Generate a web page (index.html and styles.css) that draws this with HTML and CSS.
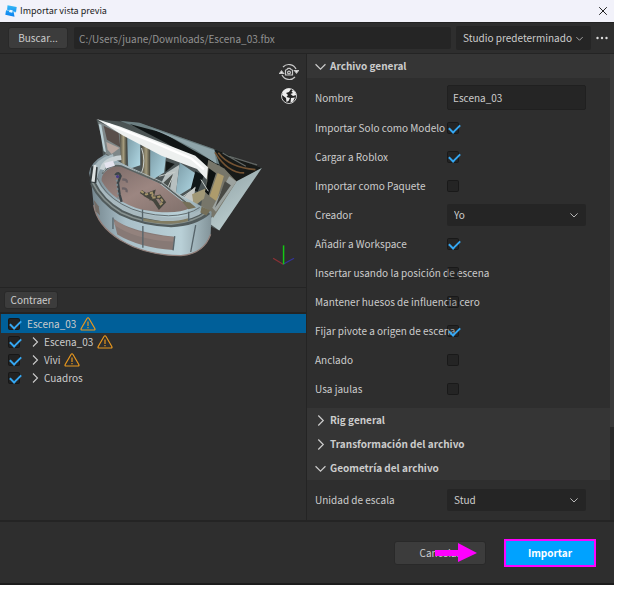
FILE: index.html
```html
<!DOCTYPE html>
<html lang="es">
<head>
<meta charset="utf-8">
<title>Importar vista previa</title>
<link rel="stylesheet" href="styles.css">
</head>
<body>
<svg width="0" height="0" class="defs" aria-hidden="true">
  <symbol id="down" viewBox="0 0 10 10"><path d="M.5 3L5 7.500 9.500 3" fill="none" stroke="currentColor" stroke-width="1.1"/></symbol>
  <symbol id="right" viewBox="0 0 10 10"><path d="M3 .5L7.500 5 3 9.500" fill="none" stroke="currentColor" stroke-width="1.1"/></symbol>
  <symbol id="warn" viewBox="0 0 16 14"><path d="M7 1.500Q8 0 9 1.500L14.800 11.500Q15.500 13 14 13H2Q.500 13 1.200 11.500Z" fill="none" stroke="#e8971e" stroke-width="1.200"/><path d="M8 4.500v4.500M8 10v1.300" stroke="#e8971e" stroke-width="1.200"/></symbol>
</svg>
<main class="window">
  <header class="titlebar">
    <svg class="logo" viewBox="0 0 12 12"><defs><linearGradient id="lg" x2="0" y2="1"><stop stop-color="#35b8f5"/><stop offset="1" stop-color="#087ff0"/></linearGradient></defs><path d="M2.500.300L11.700 2 11 7.300 8.700 7 9.500 11.700.300 9.800 1.100 5 3 5.300 2.100 4.800Z" fill="url(#lg)"/><path d="M4.600 4.700l3.100.600-.500 2.500-3.200-.700z" fill="#e9f6ff"/><path d="M1 5l3 .500M7.500 6.500l3.500.800" stroke="#b7e6fc" stroke-width=".600"/></svg>
    <h1>Importar vista previa</h1>
    <button class="close" aria-label="Cerrar"><svg viewBox="0 0 10 10"><path d="M1.200 1.200l7.600 7.600M8.800 1.200L1.200 8.800" stroke="#222" stroke-width="1"/></svg></button>
  </header>
  <div class="toolbar">
    <button class="btn browse">Buscar...</button>
    <input class="path" type="text" aria-label="Ruta del archivo" value="C:/Users/juane/Downloads/Escena_03.fbx">
    <div class="pick preset"><select aria-label="Ajuste"><option>Studio predeterminado</option></select><svg><use href="#down"/></svg></div>
    <button class="more" aria-label="Más"><svg viewBox="0 0 12 4"><g fill="#ddd"><circle cx="1.500" cy="2" r="1.200"/><circle cx="6" cy="2" r="1.200"/><circle cx="10.500" cy="2" r="1.200"/></g></svg></button>
  </div>
  <div class="content">
    <section class="left">
      <div class="viewport">
        <svg class="scene" viewBox="0 0 307 233" role="img" aria-label="Modelo 3D">
          <defs>
            <linearGradient id="side" x2=".6" y2="1"><stop stop-color="#8b9da1"/><stop offset="1" stop-color="#c0d2d3"/></linearGradient>
            <linearGradient id="floor" x2="1" y2="1"><stop stop-color="#796966"/><stop offset=".5" stop-color="#9c8681"/><stop offset="1" stop-color="#80706b"/></linearGradient>
            <linearGradient id="wall" x2="1"><stop stop-color="#71828a"/><stop offset=".3" stop-color="#a9bfc8"/><stop offset=".75" stop-color="#b9d0d7"/><stop offset="1" stop-color="#829399"/></linearGradient>
            <linearGradient id="pane" x2="1" y2="1"><stop stop-color="#7b9ba6"/><stop offset="1" stop-color="#b3dbe7"/></linearGradient>
            <linearGradient id="brass" x2="1"><stop stop-color="#4b4a40"/><stop offset=".5" stop-color="#a59c7d"/><stop offset="1" stop-color="#333630"/></linearGradient>
          </defs>
          <g transform="translate(80 51) scale(.3333)">
            <path d="M50 44L180 55 405 133 548 190 420 378 380 360 370 320 80 145Z" fill="#4b5454"/>
            <path d="M120 48L180 54 410 135 435 178 395 182 270 105Z" fill="#6d8083"/>
            <path d="M150 58L250 84 330 130 420 180 385 190 260 115Z" fill="#101515"/>
            <path d="M205 67L405 137 412 178 350 136 285 102Z" fill="#8fa5aa"/>
            <path d="M405 133L548 190 475 231 430 207Z" fill="#171a18"/>
            <path d="M417 144Q450 188 529 195M407 143Q445 205 495 205" fill="none" stroke="#745333" stroke-width="5"/>
            <path d="M430 145L500 185M450 155L534 181" stroke="#626765" stroke-width="4"/>
            <path d="M548 190L420 378 386 354 472 230Z" fill="url(#side)"/>
            <path d="M387 165L435 192 472 231 402 340 365 305Z" fill="#77766a"/>
            <path d="M415 205L434 214 412 290 391 275Z" fill="#ad9b6c"/>
            <path d="M450 215L472 231 410 322 399 310Z" fill="#9ca3a0"/>
            <path d="M437 230L455 242 407 310Z" fill="#494a45"/>
            <path d="M60 50L385 188 380 260 350 315 70 155Z" fill="#4c5556"/>
            <path d="M55 50L120 80 130 165 78 148Z" fill="#7e8788"/>
            <path d="M72 63L117 85 122 128 82 105Z" fill="#594f4b"/>
            <path d="M80 112L120 130 96 148 84 135Z" fill="#b7a69f"/>
            <path d="M57 58L65 60 79 143 72 140Z" fill="#b9cfd5"/>
            <path d="M120 80L143 94 140 184 124 173Z" fill="url(#brass)"/>
            <path d="M143 94L182 112 182 182 146 194Z" fill="url(#pane)"/>
            <path d="M186 117L214 132 213 226 186 215Z" fill="url(#brass)"/>
            <path d="M212 127L260 152 254 204 212 230Z" fill="url(#pane)"/>
            <path d="M260 170L286 178 258 202Z" fill="#151918"/>
            <path d="M260 205L300 180 289 270 241 244Z" fill="#b7c0c0"/>
            <path d="M251 235L280 208 270 261Z" fill="#4b514e"/>
            <path d="M301 174L348 206 338 248 288 279Z" fill="url(#pane)"/>
            <path d="M348 200L374 212 355 262 334 254Z" fill="#111819"/>
            <path d="M306 284L348 246 342 302 323 305Z" fill="#c3c7c5"/>
            <path d="M338 269L382 250 374 282 344 306Z" fill="#a19877"/>
            <path d="M388 190L410 206 388 272 377 262 384 231Z" fill="#0d1111"/>
            <path d="M186 130Q200 170 186 205M239 215L288 202M280 216L260 260M303 281L349 250M365 225L387 260" stroke="#c8cecb" stroke-width="3" fill="none"/>
            <path d="M51 43L123 66 275 125 348 153 386 188 382 225 353 193 246 153 130 92Z" fill="#edf0ef"/>
            <path d="M83 57L220 112 335 161 374 194" fill="none" stroke="#fff" stroke-width="7"/>
            <path d="M77 149Q31 174 28 205L35 236 42 302Q52 363 122 407 199 454 305 454 374 448 394 390L397 322Z" fill="url(#wall)"/>
            <path d="M42 302Q52 363 122 407 199 454 305 454 374 448 394 390" fill="none" stroke="#93817c" stroke-width="4"/>
            <path d="M66 229Q62 198 116 180L238 235 333 310Q290 334 188 316 100 291 66 229Z" fill="url(#floor)"/>
            <path d="M68 207Q84 178 125 184L245 235 330 302" fill="none" stroke="#59605f" stroke-width="5"/>
            <path d="M70 204Q86 174 125 177L245 231 334 298" fill="none" stroke="#a9b4b5" stroke-width="3"/>
            <path d="M33 202Q50 161 100 148L103 161Q60 179 52 222 67 267 122 298 181 335 269 339 340 338 371 309L386 326Q342 363 248 357 140 340 79 284 38 246 33 202Z" fill="#a8b9bf"/>
            <path d="M53 221Q75 270 127 299 184 332 267 334 326 333 361 309" fill="none" stroke="#626c6f" stroke-width="3"/>
            <path d="M39 234Q65 290 125 325 190 357 275 360 346 357 387 322" fill="none" stroke="#515b5c" stroke-width="17"/>
            <path d="M38 233Q66 290 125 325 191 357 275 359 345 354 386 321" fill="none" stroke="#87918f" stroke-width="5"/>
            <path d="M190 345Q270 363 328 345" fill="none" stroke="#827d63" stroke-width="8"/>
            <path d="M35 184L54 188 50 235 29 234Z" fill="#303739"/><path d="M42 180L50 182 45 232 35 231Z" fill="#dce2e2"/>
            <path d="M67 195Q75 164 125 159" fill="none" stroke="#c9d2d5" stroke-width="14"/>
            <path d="M74 175L100 168 106 183 79 192Z" fill="#e5e4ef"/>
            <path d="M101 342Q150 382 285 397L281 437Q180 430 113 390Z" fill="#877975"/>
            <path d="M105 353Q165 399 284 405" fill="none" stroke="#9f8c86" stroke-width="14" opacity=".5"/>
            <path d="M100 339V374M189 315V350M190 365V430M328 322V350M349 362L334 443M286 395L281 438" stroke="#56646a" stroke-width="4"/>
            <path d="M42 286L57 305 61 333 48 320Z" fill="#736b65"/>
            <path d="M107 212Q117 199 123 214L115 235 120 270 126 292" fill="none" stroke="#3b4448" stroke-width="7"/>
            <path d="M110 212L116 286" stroke="#7c8c92" stroke-width="5" stroke-dasharray="6 7"/><circle cx="114" cy="216" r="5" fill="#4a3c84"/>
            <path d="M128 225q15-2 14 9M127 252q17-2 14 11" fill="none" stroke="#6b6265" stroke-width="7"/>
            <path d="M184 261L200 272 221 264 217 281 240 276 253 293 239 308 225 287 195 270" fill="none" stroke="#45453d" stroke-width="11"/>
            <path d="M184 260L200 270 221 263 217 280 240 276 251 293 239 303" fill="none" stroke="#a4946b" stroke-width="6" stroke-dasharray="10 5"/>
            <path d="M307 290L332 294 350 309 327 314ZM367 306L393 318 381 333 363 324Z" fill="#756f58"/>
          </g>
          <path d="M284 211l-10-6" stroke="#8c3034" stroke-width="1.200"/><path d="M284 211l11-6" stroke="#34349a" stroke-width="1.200"/><path d="M284.500 211v-19" stroke="#14c814" stroke-width="1.500"/>
        </svg>
        <div class="tools">
          <button aria-label="Restablecer cámara"><svg viewBox="0 0 20 20" fill="none" stroke="#c9c9c9" stroke-width="1.200"><path d="M4 5a8 8 0 0 1 13 2M16 15a8 8 0 0 1-13-2"/><path d="M15.500 8.500h4l-2 2.500zM.500 11.500h4l-2-2.500z" fill="#eee"/><path d="M6.500 8.500Q6.500 7.500 8 7.500l1-1.200h2l1 1.200q1.500 0 1.500 1V13h-7z"/><circle cx="10" cy="10.500" r="1.400"/></svg></button>
          <button aria-label="Entorno"><svg viewBox="0 0 20 20"><circle cx="10" cy="10" r="7.500" fill="#222" stroke="#ccc"/><path d="M4 5Q8 1.500 12 3L10 6 7 7 9 9 7.500 11 11 12 9.500 15 7.500 16 7 12 3 9ZM14 4Q17 6 17.300 9L14 10 11.500 8 14 7 12.500 5.500ZM12 12l4-.500-2 4-2.500 1.200z" fill="#ededed"/></svg></button>
        </div>
      </div>
      <div class="treebar"><button class="btn collapse">Contraer</button></div>
      <ul class="tree">
        <li class="selected"><label><input type="checkbox" checked><span>Escena_03</span></label><svg class="warn"><use href="#warn"/></svg></li>
        <li><input id="t1" type="checkbox" checked><svg class="arrow"><use href="#right"/></svg><label for="t1">Escena_03</label><svg class="warn"><use href="#warn"/></svg></li>
        <li><input id="t2" type="checkbox" checked><svg class="arrow"><use href="#right"/></svg><label for="t2">Vivi</label><svg class="warn"><use href="#warn"/></svg></li>
        <li><input id="t3" type="checkbox" checked><svg class="arrow"><use href="#right"/></svg><label for="t3">Cuadros</label></li>
      </ul>
    </section>
    <section class="right">
      <div class="settings">
        <h2><svg><use href="#down"/></svg>Archivo general</h2>
        <div class="fields">
          <div class="row tall"><label for="f1">Nombre</label><input id="f1" class="text" type="text" value="Escena_03"></div>
          <div class="row"><label for="f2">Importar Solo como Modelo</label><input id="f2" type="checkbox" checked></div>
          <div class="row"><label for="f3">Cargar a Roblox</label><input id="f3" type="checkbox" checked></div>
          <div class="row"><label for="f4">Importar como Paquete</label><input id="f4" type="checkbox"></div>
          <div class="row"><label for="f5">Creador</label><div class="pick"><select id="f5"><option>Yo</option></select><svg><use href="#down"/></svg></div></div>
          <div class="row"><label for="f6">Añadir a Workspace</label><input id="f6" type="checkbox" checked></div>
          <div class="row"><label for="f7">Insertar usando la posición de escena</label><input id="f7" type="checkbox"></div>
          <div class="row"><label for="f8">Mantener huesos de influencia cero</label><input id="f8" type="checkbox"></div>
          <div class="row"><label for="f9">Fijar pivote a origen de escena</label><input id="f9" type="checkbox" checked></div>
          <div class="row"><label for="f10">Anclado</label><input id="f10" type="checkbox"></div>
          <div class="row"><label for="f11">Usa jaulas</label><input id="f11" type="checkbox"></div>
        </div>
        <h2><svg><use href="#right"/></svg>Rig general</h2>
        <h2><svg><use href="#right"/></svg>Transformación del archivo</h2>
        <h2><svg><use href="#down"/></svg>Geometría del archivo</h2>
        <div class="fields">
          <div class="row tall"><label for="f12">Unidad de escala</label><div class="pick"><select id="f12"><option>Stud</option></select><svg><use href="#down"/></svg></div></div>
        </div>
      </div>
      <div class="scroll"><div class="thumb"></div></div>
    </section>
  </div>
  <footer>
    <div class="cancel-wrap"><button class="btn cancel">Cancelar</button><svg class="pointer" viewBox="0 0 42 20"><path d="M0 7H23V0L42 10 23 19V13H0Z" fill="#f0f"/></svg></div>
    <button class="import">Importar</button>
  </footer>
</main>
</body>
</html>
```
FILE: styles.css
```css
* { box-sizing: border-box; }
body {
  margin: 0;
  padding-right: 9px;
  background: #fff;
  color: #ccc;
  font: 10px/16px "Noto Sans CJK SC", "Noto Sans", sans-serif;
}
.defs { position: absolute; }
svg { display: block; flex: none; }
button, input, select { font: inherit; color: inherit; margin: 0; }
button { border: 0; padding: 0; background: none; }
.window { background: #2e2e2e; border-bottom: 2px solid #1c1c1c; }
.titlebar {
  display: flex;
  align-items: center;
  height: 22px;
  padding: 0 6px 0 5px;
  gap: 3px;
  background: #f2f2fa;
  color: #1c1c1c;
}
.titlebar h1 { flex: 1; margin: 0; font-size: 9px; font-weight: 400; }
.logo { width: 12px; height: 12px; }
.close svg { width: 10px; height: 10px; }
.toolbar {
  display: flex;
  align-items: center;
  height: 32px;
  padding: 0 6px 0 8px;
  border-top: 1px solid #222;
  border-bottom: 1px solid #242424;
}
.btn { background: #3c3c3c; border: 1px solid #292929; border-radius: 3px; }
.browse { width: 60px; height: 22px; margin-right: 6px; }
.path {
  flex: 1;
  min-width: 0;
  height: 22px;
  margin-right: 5px;
  padding: 0 5px;
  border: 0;
  border-radius: 2px;
  background: #252525;
  color: #929292;
}
.pick { position: relative; width: 139px; }
.pick select {
  display: block;
  width: 100%;
  height: 22px;
  padding: 0 7px;
  appearance: none;
  border: 0;
  border-radius: 2px;
  background: #252525;
}
.pick svg { position: absolute; right: 8px; top: 7px; width: 8px; height: 8px; pointer-events: none; }
.preset { width: 135px; margin-right: 5px; }
.preset select { height: 24px; }
.preset svg { top: 9px; width: 7px; height: 7px; }
.more svg { width: 12px; height: 4px; }
.content { display: grid; grid-template-columns: 1fr 1fr; }
.left { border-right: 1px solid #242424; }
.viewport { position: relative; padding-bottom: 1px; }
.scene { width: 100%; }
.tools { position: absolute; top: 8px; right: 7px; display: grid; gap: 4px; }
.tools svg { width: 20px; height: 20px; }
.treebar {
  padding: 3px 4px;
  border-top: 1px solid #242424;
  border-bottom: 2px solid #242424;
}
.collapse { display: block; width: 54px; height: 18px; line-height: 16px; }
.tree { list-style: none; margin: 0; padding: 0 0 0 1px; }
.tree li { display: flex; align-items: center; height: 18px; padding-left: 7px; }
.tree label { display: flex; align-items: center; }
.tree label span { padding-left: 7px; }
.tree .selected { height: 19px; background: #005f99; }
.arrow { width: 10px; height: 10px; margin: 0 4px 0 10px; }
.warn { width: 16px; height: 14px; margin-left: 4px; }
input[type="checkbox"] {
  appearance: none;
  position: relative;
  flex: none;
  width: 12px;
  height: 12px;
  border: 1px solid rgba(0, 0, 0, 0.3);
  border-radius: 2px;
  background: rgba(0, 0, 0, 0.2);
}
.tree input[type="checkbox"] { background: #222; }
input[type="checkbox"]:checked::after {
  content: "";
  position: absolute;
  left: 1px;
  top: 1px;
  width: 9px;
  height: 5px;
  border: solid #35a7f2;
  border-width: 0 0 2px 2px;
  transform: rotate(-45deg);
}
.right { display: flex; }
.settings { flex: 1; min-width: 0; }
h2 {
  display: flex;
  align-items: center;
  height: 24px;
  margin: 0;
  padding-left: 8px;
  gap: 4px;
  background: #353535;
  font-size: 10px;
  font-weight: 700;
}
h2 svg { width: 11px; height: 11px; }
.fields { padding: 4px 8px 5px; }
.row { display: grid; grid-template-columns: 132px 1fr; align-items: center; height: 29px; }
.row.tall { height: 31px; }
.row label { white-space: nowrap; }
.text {
  width: 139px;
  height: 25px;
  padding: 0 5px;
  border: 1px solid #202020;
  border-radius: 2px;
  background: #252525;
}
.scroll { width: 4px; background: #292929; }
.thumb { height: 80%; background: #3a3a3a; }
footer {
  display: flex;
  justify-content: flex-end;
  align-items: center;
  gap: 18px;
  height: 63px;
  padding-right: 18px;
  border-top: 2px solid #242424;
}
.cancel-wrap { position: relative; }
.cancel { display: block; width: 92px; height: 24px; }
.pointer { position: absolute; left: 41px; top: 2px; width: 42px; height: 20px; }
.import {
  width: 92px;
  height: 28px;
  border: 2px solid #f0f;
  background: #00a2ff;
  color: #fff;
  font-weight: 700;
}
```
